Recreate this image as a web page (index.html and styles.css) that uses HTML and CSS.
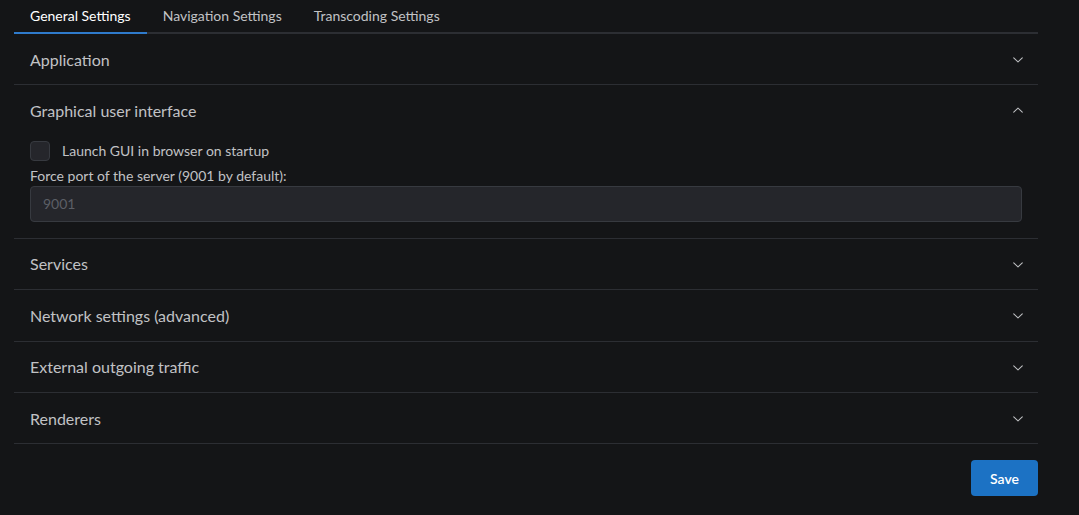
FILE: index.html
```html
<!DOCTYPE html>
<html lang="en">
<head>
<meta charset="utf-8">
<title>Settings</title>
<link rel="stylesheet" href="styles.css">
</head>
<body>
<div class="page">
  <div class="tabs">
    <button class="tab active">General Settings</button>
    <button class="tab">Navigation Settings</button>
    <button class="tab">Transcoding Settings</button>
  </div>
  <div class="accordion">
    <div class="item">
      <div class="control"><span class="label">Application</span>
        <svg class="chev" viewBox="0 0 15 15" width="16" height="16"><path fill="currentColor" fill-rule="evenodd" d="M3.135 6.158a.5.5 0 0 1 .707-.023L7.5 9.565l3.658-3.43a.5.5 0 0 1 .684.73l-4 3.75a.5.5 0 0 1-.684 0l-4-3.75a.5.5 0 0 1-.023-.707Z"/></svg>
      </div>
    </div>
    <div class="item">
      <div class="control"><span class="label">Graphical user interface</span>
        <svg class="chev up" viewBox="0 0 15 15" width="16" height="16"><path fill="currentColor" fill-rule="evenodd" d="M3.135 6.158a.5.5 0 0 1 .707-.023L7.5 9.565l3.658-3.43a.5.5 0 0 1 .684.73l-4 3.75a.5.5 0 0 1-.684 0l-4-3.75a.5.5 0 0 1-.023-.707Z"/></svg>
      </div>
      <div class="content">
        <label class="check"><span class="box"></span><span>Launch GUI in browser on startup</span></label>
        <label class="field-label">Force port of the server (9001 by default):</label>
        <input class="input" type="text" placeholder="9001">
      </div>
    </div>
    <div class="item">
      <div class="control"><span class="label">Services</span>
        <svg class="chev" viewBox="0 0 15 15" width="16" height="16"><path fill="currentColor" fill-rule="evenodd" d="M3.135 6.158a.5.5 0 0 1 .707-.023L7.5 9.565l3.658-3.43a.5.5 0 0 1 .684.73l-4 3.75a.5.5 0 0 1-.684 0l-4-3.75a.5.5 0 0 1-.023-.707Z"/></svg>
      </div>
    </div>
    <div class="item">
      <div class="control"><span class="label">Network settings (advanced)</span>
        <svg class="chev" viewBox="0 0 15 15" width="16" height="16"><path fill="currentColor" fill-rule="evenodd" d="M3.135 6.158a.5.5 0 0 1 .707-.023L7.5 9.565l3.658-3.43a.5.5 0 0 1 .684.73l-4 3.75a.5.5 0 0 1-.684 0l-4-3.75a.5.5 0 0 1-.023-.707Z"/></svg>
      </div>
    </div>
    <div class="item">
      <div class="control"><span class="label">External outgoing traffic</span>
        <svg class="chev" viewBox="0 0 15 15" width="16" height="16"><path fill="currentColor" fill-rule="evenodd" d="M3.135 6.158a.5.5 0 0 1 .707-.023L7.5 9.565l3.658-3.43a.5.5 0 0 1 .684.73l-4 3.75a.5.5 0 0 1-.684 0l-4-3.75a.5.5 0 0 1-.023-.707Z"/></svg>
      </div>
    </div>
    <div class="item">
      <div class="control"><span class="label">Renderers</span>
        <svg class="chev" viewBox="0 0 15 15" width="16" height="16"><path fill="currentColor" fill-rule="evenodd" d="M3.135 6.158a.5.5 0 0 1 .707-.023L7.5 9.565l3.658-3.43a.5.5 0 0 1 .684.73l-4 3.75a.5.5 0 0 1-.684 0l-4-3.75a.5.5 0 0 1-.023-.707Z"/></svg>
      </div>
    </div>
  </div>
  <div class="actions">
    <button class="save">Save</button>
  </div>
</div>
</body>
</html>
```

FILE: styles.css
```css
html, body {
  margin: 0;
  padding: 0;
  background: #141517;
  height: 100%;
}
body {
  font-family: "Lato", "Noto Sans", sans-serif;
  color: #c1c2c5;
}
.page {
  width: 1024px;
  margin-left: 14px;
}
.tabs {
  display: flex;
  height: 34px;
  box-sizing: border-box;
  border-bottom: 2px solid #2c2e33;
}
.tab {
  background: none;
  border: none;
  border-bottom: 2px solid transparent;
  margin-bottom: -2px;
  padding: 0 16px 1px;
  height: 34px;
  font-family: inherit;
  font-size: 14px;
  color: #c1c2c5;
  cursor: pointer;
}
.tab.active {
  border-bottom-color: #2f7bcc;
  color: #ffffff;
}
.item {
  border-bottom: 1px solid #2c2e33;
}
.control {
  display: flex;
  align-items: center;
  justify-content: space-between;
  height: 50.4px;
  padding: 0 12px 0 16px;
}
.label {
  font-size: 16px;
  color: #c1c2c5;
}
.chev {
  color: #c1c2c5;
}
.chev.up {
  transform: rotate(180deg);
}
.content {
  display: flex;
  flex-direction: column;
  padding: 5px 16px 16px;
}
.check {
  display: flex;
  align-items: center;
  gap: 12px;
  font-size: 14px;
  height: 20px;
}
.box {
  width: 20px;
  height: 20px;
  box-sizing: border-box;
  background: #25262b;
  border: 1px solid #373a40;
  border-radius: 4px;
}
.field-label {
  margin-top: 4px;
  font-size: 14px;
  line-height: 21px;
}
.input {
  height: 36px;
  box-sizing: border-box;
  background: #25262b;
  border: 1px solid #373a40;
  border-radius: 4px;
  padding: 0 12px;
  font-family: inherit;
  font-size: 14px;
  color: #c1c2c5;
  outline: none;
}
.input::placeholder {
  color: #5c5f66;
}
.actions {
  display: flex;
  justify-content: flex-end;
  padding-top: 16px;
}
.save {
  height: 36px;
  padding: 0 19px;
  background: #1c72c4;
  border: none;
  border-radius: 4px;
  color: #ffffff;
  font-family: inherit;
  font-size: 14px;
  font-weight: 600;
  cursor: pointer;
}
```
